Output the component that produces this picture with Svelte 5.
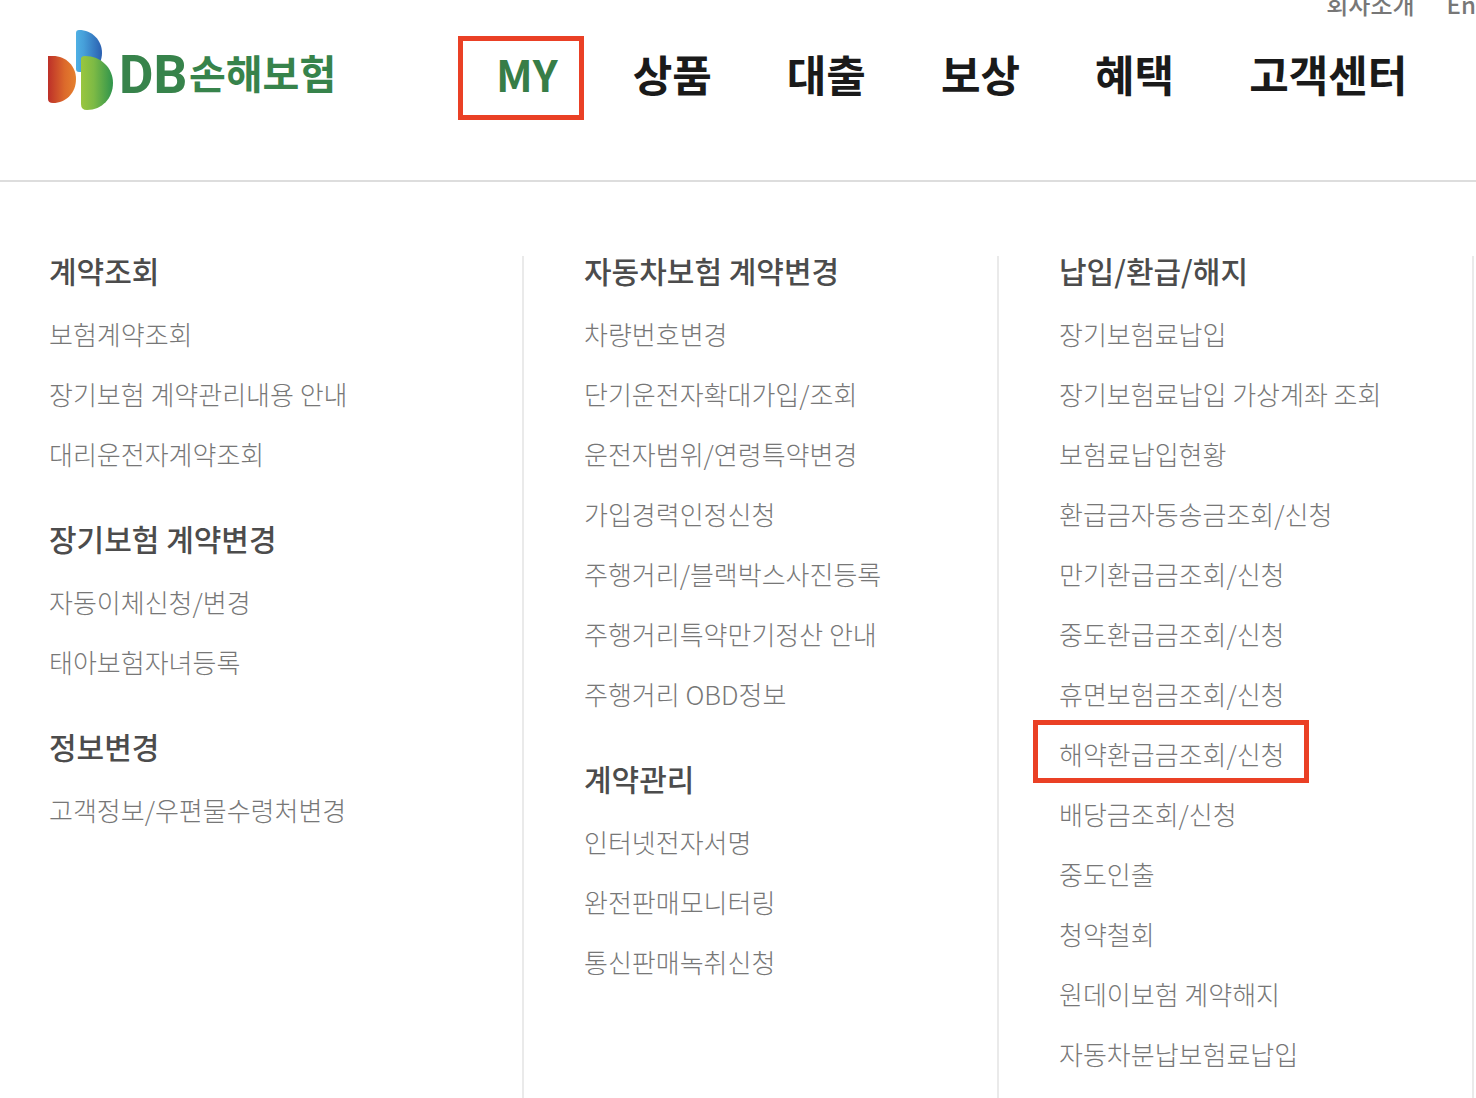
<script>
  const utils = ['회사소개', 'En'];
  const tabs = ['MY', '상품', '대출', '보상', '혜택', '고객센터'];
  const active = 'MY';
  const marked = '해약환급금조회/신청';

  const columns = [
    [
      { title: '계약조회', items: ['보험계약조회', '장기보험 계약관리내용 안내', '대리운전자계약조회'] },
      { title: '장기보험 계약변경', items: ['자동이체신청/변경', '태아보험자녀등록'] },
      { title: '정보변경', items: ['고객정보/우편물수령처변경'] }
    ],
    [
      {
        title: '자동차보험 계약변경',
        items: [
          '차량번호변경',
          '단기운전자확대가입/조회',
          '운전자범위/연령특약변경',
          '가입경력인정신청',
          '주행거리/블랙박스사진등록',
          '주행거리특약만기정산 안내',
          '주행거리 OBD정보'
        ]
      },
      { title: '계약관리', items: ['인터넷전자서명', '완전판매모니터링', '통신판매녹취신청'] }
    ],
    [
      {
        title: '납입/환급/해지',
        items: [
          '장기보험료납입',
          '장기보험료납입 가상계좌 조회',
          '보험료납입현황',
          '환급금자동송금조회/신청',
          '만기환급금조회/신청',
          '중도환급금조회/신청',
          '휴면보험금조회/신청',
          '해약환급금조회/신청',
          '배당금조회/신청',
          '중도인출',
          '청약철회',
          '원데이보험 계약해지',
          '자동차분납보험료납입'
        ]
      }
    ]
  ];
</script>

<div class="page">
  <header>
    <div class="utils">
      {#each utils as util}
        <a href="/">{util}</a>
      {/each}
    </div>
    <div class="bar">
      <a class="logo" href="/" aria-label="DB손해보험">
        <svg width="288" height="80" viewBox="0 0 288 80">
          <defs>
            <linearGradient id="red">
              <stop offset="0" stop-color="#bd3029" />
              <stop offset="0.6" stop-color="#dc6a2b" />
              <stop offset="1" stop-color="#e5812e" />
            </linearGradient>
            <linearGradient id="blue">
              <stop offset="0" stop-color="#4fb0e4" />
              <stop offset="0.3" stop-color="#469fd9" />
              <stop offset="1" stop-color="#2a5fb0" />
            </linearGradient>
            <linearGradient id="green">
              <stop offset="0" stop-color="#9ac63f" />
              <stop offset="0.4" stop-color="#7dba45" />
              <stop offset="1" stop-color="#2f944c" />
            </linearGradient>
          </defs>
          <path d="M28 3 Q28 0 31 0 C44 0 54 10 54 23 C54 30 51 36 46 42 L31 42 Q28 42 28 39 Z" fill="url(#blue)" />
          <path d="M0 26 L5 26 C18 26 28 36 28 49 C28 63 18 73 5 73 Q0 73 0 69 Z" fill="url(#red)" />
          <path d="M33 29 Q33 26 37 26 C53 26 65 38 65 53 C65 68 54 80 39 80 Q33 80 33 74 Z" fill="url(#green)" />
          <text class="latin" x="71" y="63">DB</text>
          <text class="hangul" x="141" y="59">손해보험</text>
        </svg>
      </a>
      <nav>
        {#each tabs as tab}
          <a href="/" class:active={tab === active}>{tab}</a>
        {/each}
      </nav>
    </div>
  </header>

  <main>
    {#each columns as groups}
      <div class="column">
        {#each groups as group}
          <section>
            <h2>{group.title}</h2>
            <ul>
              {#each group.items as item}
                <li><a href="/" class:marked={item === marked}>{item}</a></li>
              {/each}
            </ul>
          </section>
        {/each}
      </div>
    {/each}
  </main>
</div>

<style>
  .page {
    display: flex;
    flex-direction: column;
    min-height: 100vh;
    background: #fff;
    font-family: 'Noto Sans CJK KR', sans-serif;
  }

  a {
    color: inherit;
    text-decoration: none;
    white-space: nowrap;
  }

  header {
    border-bottom: 2px solid #ddd;
  }

  .utils {
    display: flex;
    justify-content: flex-end;
    align-items: flex-end;
    gap: 32px;
    height: 20px;
    overflow: hidden;
    font-size: 24px;
    line-height: 32px;
    font-weight: 500;
    color: #777;
  }

  .bar {
    display: flex;
    align-items: flex-start;
    gap: 160px;
    height: 160px;
    padding: 10px 48px 0;
    box-sizing: border-box;
  }

  .logo,
  .logo svg {
    display: block;
    flex: none;
  }

  .logo text {
    fill: #37834b;
    font-weight: 700;
  }

  .latin {
    font-family: Roboto, sans-serif;
    font-size: 53px;
  }

  .hangul {
    font-size: 40px;
  }

  nav {
    display: flex;
    gap: 75px;
    font-size: 43px;
    line-height: 60px;
    font-weight: 700;
    color: #1a1a1a;
    padding-top: 13px;
  }

  .active {
    position: relative;
    color: #377d47;
  }

  .active::after {
    content: '';
    position: absolute;
    inset: -7px -26px -17px -38px;
    border: 5px solid #ea4025;
  }

  main {
    flex: 1;
    display: grid;
    grid-template-columns: repeat(3, 1fr);
    padding: 74px 2px 0 49px;
  }

  .column {
    border-right: 2px solid #eaeaea;
  }

  .column + .column {
    padding-left: 60px;
  }

  section + section {
    margin-top: 40px;
  }

  h2 {
    margin: 0 0 20px;
    font-size: 30px;
    line-height: 28px;
    font-weight: 500;
    color: #4c4c4c;
  }

  ul {
    margin: 0;
    padding: 0;
    list-style: none;
  }

  li {
    font-size: 26px;
    line-height: 60px;
    font-weight: 300;
    color: #777;
  }

  .marked {
    display: inline-block;
    position: relative;
  }

  .marked::after {
    content: '';
    position: absolute;
    inset: -4px -24px 1px -26px;
    border: 5px solid #ea4025;
  }
</style>
